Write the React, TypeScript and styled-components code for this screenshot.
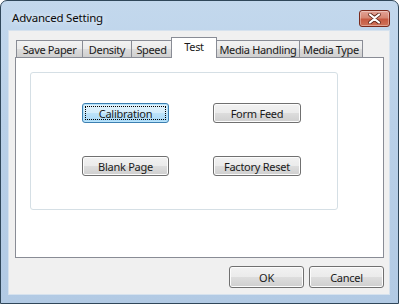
import styled, { createGlobalStyle, css } from "styled-components";

const GlobalStyle = createGlobalStyle`
  html, body {
    margin: 0;
    padding: 0;
    background: #ffffff;
  }
  body {
    font-family: "Noto Sans", "Open Sans", sans-serif;
    font-size: 11px;
    letter-spacing: -0.25px;
    color: #1a1a1a;
  }
  * {
    box-sizing: border-box;
  }
`;

const Window = styled.div`
  width: 399px;
  height: 304px;
  border: 1px solid #30475a;
  border-radius: 7px 7px 0 0;
  background: linear-gradient(180deg, #c3d8ed 0%, #b9d0e8 40%, #b2cae4 100%);
  display: flex;
  flex-direction: column;
  overflow: hidden;
`;

const TitleBar = styled.div`
  height: 29px;
  flex: none;
  display: flex;
  align-items: flex-start;
  justify-content: space-between;
  padding: 0 8px 0 11px;
`;

const Title = styled.span`
  margin-top: 9px;
  font-size: 11.5px;
  letter-spacing: -0.2px;
  color: #0a0a0a;
  text-shadow: 0 0 6px rgba(255, 255, 255, 0.9);
`;

const CloseButton = styled.button`
  margin-top: 9px;
  width: 31px;
  height: 17px;
  padding: 0;
  border: 1px solid #7a2a1c;
  border-radius: 3px;
  background: linear-gradient(180deg, #e2a397 0%, #d68773 45%, #c65a42 55%, #cf735a 100%);
  box-shadow: inset 0 0 0 1px rgba(255, 255, 255, 0.35);
  display: flex;
  align-items: center;
  justify-content: center;
`;

const Client = styled.div`
  flex: 1;
  margin: 0 8px 8px 7px;
  background: #f0f0f0;
  border: 1px solid #d6e2ee;
  display: flex;
  flex-direction: column;
  padding: 5px 5px 0 6px;
`;

const TabStrip = styled.div`
  display: flex;
  align-items: flex-end;
  height: 21px;
  flex: none;
  padding-left: 1px;
  position: relative;
  z-index: 1;
`;

const Tab = styled.div<{ $active?: boolean; $width: number }>`
  width: ${(p) => p.$width}px;
  height: 17px;
  margin-right: -1px;
  display: flex;
  align-items: center;
  justify-content: center;
  border: 1px solid #898c95;
  border-bottom: none;
  background: linear-gradient(180deg, #f2f2f2 0%, #ebebeb 50%, #dddddd 51%, #cfcfcf 100%);
  white-space: nowrap;
  letter-spacing: -0.35px;

  ${(p) =>
    p.$active &&
    css`
      height: 21px;
      padding-top: 1px;
      background: #ffffff;
      position: relative;
      top: 1px;
      z-index: 2;
      align-items: flex-start;
    `}
`;

const Panel = styled.div`
  height: 201px;
  flex: none;
  background: #ffffff;
  border: 1px solid #898c95;
  padding: 14px 0 0 14px;
`;

const GroupBox = styled.div`
  width: 308px;
  height: 138px;
  border: 1px solid #d5dfe5;
  border-radius: 3px;
  display: grid;
  grid-template-columns: 87px 88px;
  grid-auto-rows: 20px;
  column-gap: 44px;
  row-gap: 33px;
  padding: 30px 0 0 51px;
`;

const Button = styled.button<{ $focused?: boolean }>`
  position: relative;
  padding: 0;
  font-family: inherit;
  font-size: 11px;
  letter-spacing: -0.25px;
  color: #1a1a1a;
  border: 1px solid #707070;
  border-radius: 3px;
  background: linear-gradient(180deg, #f2f2f2 0%, #ebebeb 50%, #dddddd 51%, #cfcfcf 100%);
  box-shadow: inset 0 0 0 1px #fcfcfc;

  ${(p) =>
    p.$focused &&
    css`
      border-color: #3c7fb1;
      background: linear-gradient(180deg, #e3f3fc 0%, #d4edfb 50%, #bde3fa 51%, #a9d9f7 100%);
      box-shadow: inset 0 0 0 1px #b8e4fb;

      &::after {
        content: "";
        position: absolute;
        inset: 2px;
        border: 1px dotted #000;
      }
    `}
`;

const Footer = styled.div`
  display: flex;
  justify-content: flex-end;
  gap: 5px;
  margin-top: 8px;
`;

const FooterButton = styled(Button)`
  width: 75px;
  height: 22px;
`;

const tabs = [
  { label: "Save Paper", width: 67 },
  { label: "Density", width: 50 },
  { label: "Speed", width: 41 },
  { label: "Test", width: 46, active: true },
  { label: "Media Handling", width: 84 },
  { label: "Media Type", width: 64 },
];

export default function App() {
  return (
    <>
      <GlobalStyle />
      <Window>
        <TitleBar>
          <Title>Advanced Setting</Title>
          <CloseButton aria-label="Close">
            <svg width="13" height="11" viewBox="0 0 13 11">
              <path
                d="M2 1.5 L6.5 5 L11 1.5 M2 9.5 L6.5 6 L11 9.5"
                stroke="#5a2418"
                strokeWidth="3.6"
                strokeLinecap="round"
                fill="none"
              />
              <path
                d="M2 1.5 L6.5 5 L11 1.5 M2 9.5 L6.5 6 L11 9.5"
                stroke="#ffffff"
                strokeWidth="2.2"
                strokeLinecap="round"
                fill="none"
              />
            </svg>
          </CloseButton>
        </TitleBar>
        <Client>
          <TabStrip>
            {tabs.map((t) => (
              <Tab key={t.label} $width={t.width} $active={t.active}>
                {t.label}
              </Tab>
            ))}
          </TabStrip>
          <Panel>
            <GroupBox>
              <Button $focused>Calibration</Button>
              <Button>Form Feed</Button>
              <Button>Blank Page</Button>
              <Button>Factory Reset</Button>
            </GroupBox>
          </Panel>
          <Footer>
            <FooterButton>OK</FooterButton>
            <FooterButton>Cancel</FooterButton>
          </Footer>
        </Client>
      </Window>
    </>
  );
}
